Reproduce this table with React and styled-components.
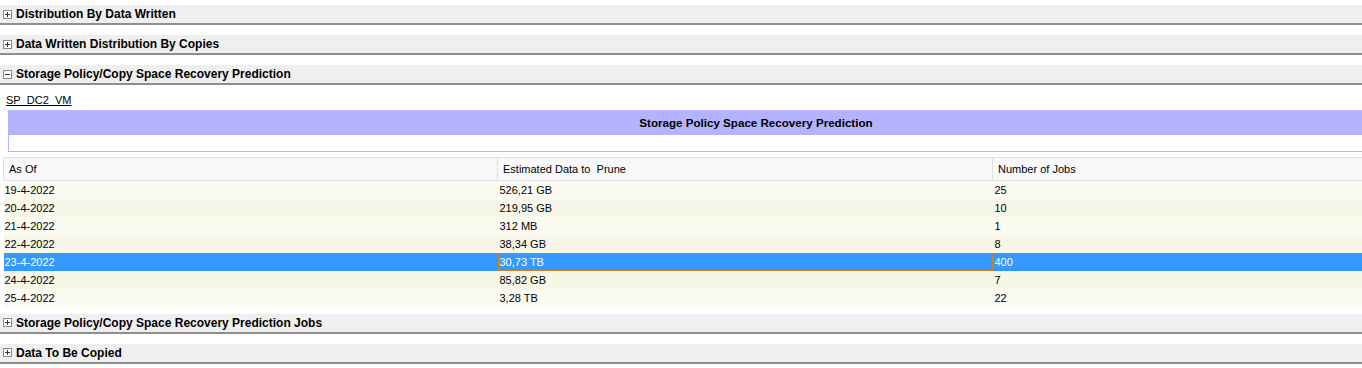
import React from "react";
import styled, { createGlobalStyle } from "styled-components";

const Global = createGlobalStyle`
  html, body { margin: 0; padding: 0; background: #ffffff; }
  body { font-family: "Liberation Sans", Arial, sans-serif; font-size: 11px; color: #000; overflow: hidden; }
`;

const Page = styled.div`
  padding-top: 5px;
  width: 1362px;
  overflow: hidden;
`;

const Section = styled.section`
  margin-bottom: ${(p) => (p.$open ? "0" : "10px")};
`;

const Header = styled.div`
  display: flex;
  align-items: center;
  gap: 4px;
  height: 18px;
  padding-left: 3px;
  background: #efefef;
  border-bottom: 2px solid #8e8e8e;
  font-weight: bold;
  font-size: 12px;
  color: #000;
`;

const Toggle = styled.span`
  position: relative;
  width: 7px;
  height: 7px;
  border: 1px solid #8a8a8a;
  background: #fff;
  flex: none;
  &::before {
    content: "";
    position: absolute;
    left: 1px;
    top: 3px;
    width: 5px;
    height: 1px;
    background: #333;
  }
  &::after {
    content: "";
    display: ${(p) => (p.$open ? "none" : "block")};
    position: absolute;
    left: 3px;
    top: 1px;
    width: 1px;
    height: 5px;
    background: #333;
  }
`;

const Body = styled.div`
  padding: 8px 0 7px 0;
`;

const PolicyLink = styled.a`
  display: block;
  margin-left: 6px;
  width: max-content;
  font-size: 11px;
  line-height: 14px;
  color: #000;
  text-decoration: underline;
`;

const TitleBox = styled.div`
  margin: 3px 0 0 8px;
  width: 1500px;
  border: 1px solid #b3b3ff;
  border-top: none;
  background: #fff;
`;

const TitleBar = styled.div`
  height: 25px;
  background: #b3b3ff;
  display: flex;
  align-items: center;
  justify-content: center;
  font-weight: bold;
  font-size: 11.6px;
  padding-right: 6px;
`;

const TitleSpacer = styled.div`
  height: 16px;
`;

const Table = styled.table`
  margin: 5px 0 0 3px;
  border-collapse: collapse;
  table-layout: fixed;
  width: 1359px;
`;

const Th = styled.th`
  height: 22px;
  padding: 0 0 0 5px;
  background: #f9f9f9;
  border: 1px solid #dedede;
  border-right: ${(p) => (p.$last ? "none" : "1px solid #dedede")};
  text-align: left;
  font-weight: normal;
  font-size: 11px;
  color: #000;
`;

const Tr = styled.tr`
  background: ${(p) => (p.$selected ? "#3399ff" : p.$odd ? "#fbfbf1" : "#f7f7e7")};
  color: ${(p) => (p.$selected ? "#fff" : "#000")};
`;

const Td = styled.td`
  height: 18px;
  padding: 0 0 0 ${(p) => (p.$pad ? p.$pad : 2)}px;
  font-size: 11px;
  white-space: nowrap;
  box-sizing: border-box;
  outline: ${(p) => (p.$focus ? "1px dotted #d9882a" : "none")};
  outline-offset: -1px;
`;

const rows = [
  ["19-4-2022", "526,21 GB", "25"],
  ["20-4-2022", "219,95 GB", "10"],
  ["21-4-2022", "312 MB", "1"],
  ["22-4-2022", "38,34 GB", "8"],
  ["23-4-2022", "30,73 TB", "400"],
  ["24-4-2022", "85,82 GB", "7"],
  ["25-4-2022", "3,28 TB", "22"],
];

const SectionHeader = ({ title, open }) => (
  <Header>
    <Toggle $open={open} />
    <span>{title}</span>
  </Header>
);

export default function App() {
  return (
    <>
      <Global />
      <Page>
        <Section>
          <SectionHeader title="Distribution By Data Written" />
        </Section>
        <Section>
          <SectionHeader title="Data Written Distribution By Copies" />
        </Section>
        <Section $open>
          <SectionHeader title="Storage Policy/Copy Space Recovery Prediction" open />
          <Body>
            <PolicyLink href="#">SP_DC2_VM</PolicyLink>
            <TitleBox>
              <TitleBar>Storage Policy Space Recovery Prediction</TitleBar>
              <TitleSpacer />
            </TitleBox>
            <Table>
              <colgroup>
                <col style={{ width: 494 }} />
                <col style={{ width: 495 }} />
                <col />
              </colgroup>
              <thead>
                <tr>
                  <Th>As Of</Th>
                  <Th>Estimated Data to&nbsp; Prune</Th>
                  <Th $last>Number of Jobs</Th>
                </tr>
              </thead>
              <tbody>
                {rows.map((r, i) => (
                  <Tr key={r[0]} $odd={i % 2 === 0} $selected={i === 4}>
                    <Td $pad={1}>{r[0]}</Td>
                    <Td $pad={2} $focus={i === 4}>{r[1]}</Td>
                    <Td $pad={2}>{r[2]}</Td>
                  </Tr>
                ))}
              </tbody>
            </Table>
          </Body>
        </Section>
        <Section>
          <SectionHeader title="Storage Policy/Copy Space Recovery Prediction Jobs" />
        </Section>
        <Section>
          <SectionHeader title="Data To Be Copied" />
        </Section>
      </Page>
    </>
  );
}
